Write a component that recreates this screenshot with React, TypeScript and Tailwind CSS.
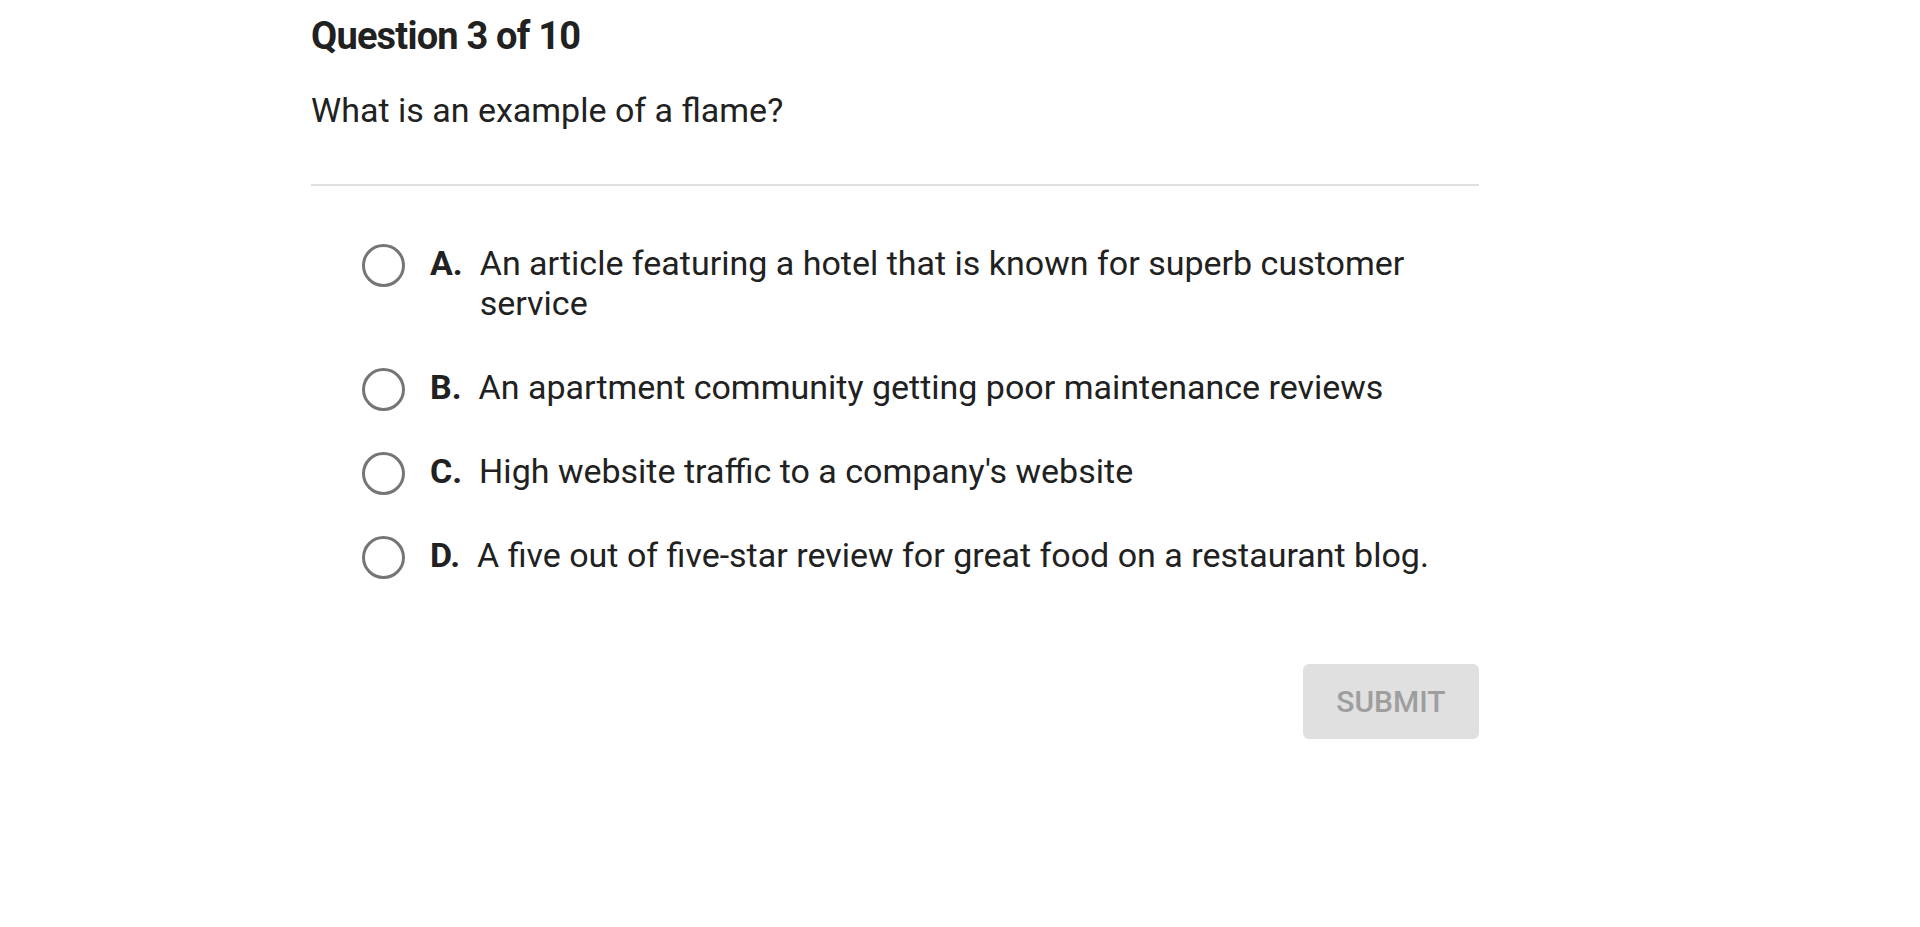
const options = [
  { letter: "A.", text: "An article featuring a hotel that is known for superb customer service" },
  { letter: "B.", text: "An apartment community getting poor maintenance reviews" },
  { letter: "C.", text: "High website traffic to a company's website" },
  { letter: "D.", text: "A five out of five-star review for great food on a restaurant blog." },
];

export default function App() {
  return (
    <div className="min-h-screen bg-white text-[#212121] font-['Roboto',sans-serif]">
      <div className="ml-[311px] w-[1168px] pt-[14px]">
        <h1 className="text-[38px] font-bold leading-[44px] tracking-[-0.8px]">Question 3 of 10</h1>
        <p className="mt-[32px] text-[34px] leading-[40px]">What is an example of a flame?</p>
        <div className="mt-[54px] h-[2px] bg-[#e0e0e0]" />

        <div className="mt-[57px] flex flex-col gap-[44px] pl-[51px]">
          {options.map((o) => (
            <label key={o.letter} className="flex items-start cursor-pointer">
              <span className="mt-[1px] -mb-[4px] h-[43px] w-[43px] shrink-0 rounded-full border-[3px] border-[#757575]" />
              <span className="ml-[25px] mr-[17px] shrink-0 text-[34px] font-bold leading-[40px]">{o.letter}</span>
              <span className="flex-1 text-[34px] leading-[40px]">{o.text}</span>
            </label>
          ))}
        </div>

        <div className="mt-[89px] flex justify-end">
          <button className="h-[75px] w-[176px] rounded-[6px] bg-[#e0e0e0] text-[30px] font-medium text-[#9e9e9e]">
            SUBMIT
          </button>
        </div>
      </div>
    </div>
  );
}
